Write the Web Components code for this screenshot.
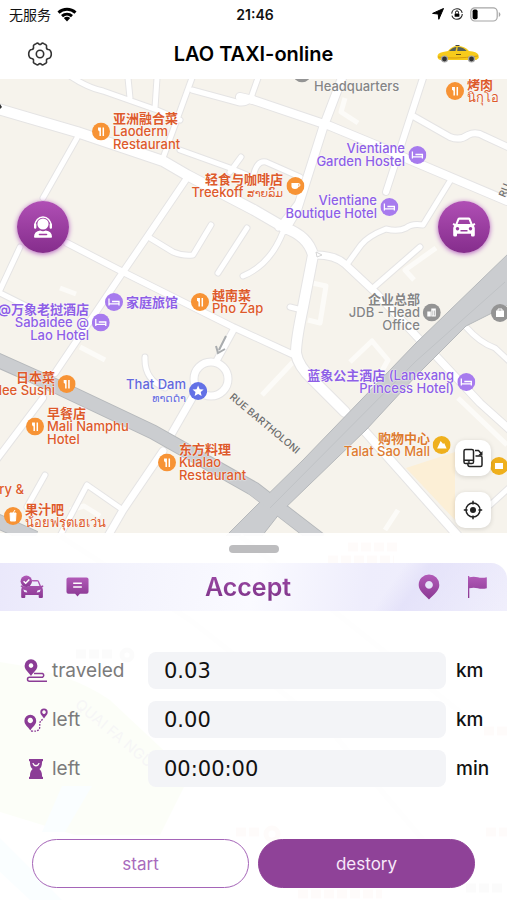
<!DOCTYPE html>
<html lang="en">
<head>
<meta charset="utf-8">
<meta name="viewport" content="width=device-width, initial-scale=1">
<title>LAO TAXI-online</title>
<style>
  body {
    margin: 0;
    min-height: 100vh;
    display: flex;
    flex-direction: column;
    background: #fff;
    color: #111;
    font-family: Inter, "Noto Sans CJK SC", "Noto Sans", "DejaVu Sans", sans-serif;
  }

  /* map and sheet share one cell, the sheet sits at the bottom */
  main {
    flex: 1;
    display: grid;
    grid-template: minmax(0, 1fr) / minmax(0, 1fr);
    overflow: hidden;
  }

  main > * {
    grid-area: 1 / 1;
  }

  trip-sheet {
    align-self: end;
  }
</style>
</head>
<body>
  <status-bar></status-bar>
  <nav-bar>LAO TAXI-online</nav-bar>
  <main>
    <map-view>
      <map-poi kind="office" x="302" y="-6"><br><br>Headquarters</map-poi>
      <map-poi kind="food" x="455" y="12"><b>烤肉</b><br>นิกุโอ</map-poi>
      <map-poi kind="food" x="101" y="52"><b>亚洲融合菜</b><br>Laoderm<br>Restaurant</map-poi>
      <map-poi kind="bed" x="417" y="76" side="left">Vientiane<br>Garden Hostel</map-poi>
      <map-poi kind="cafe" x="295" y="107" side="left"><b>轻食与咖啡店</b><br>Treekoff <small>ສາຍລົມ</small></map-poi>
      <map-poi kind="bed" x="389" y="128" side="left">Vientiane<br>Boutique Hotel</map-poi>
      <map-poi kind="bed" x="114" y="223"><b>家庭旅馆</b></map-poi>
      <map-poi kind="bed" x="101" y="243" side="left"><b>@万象老挝酒店</b><br>Sabaidee @<br>Lao Hotel</map-poi>
      <map-poi kind="food" x="200" y="223"><b>越南菜</b><br>Pho Zap</map-poi>
      <map-poi kind="office" x="432" y="233" side="left"><b>企业总部</b><br>JDB - Head<br>Office</map-poi>
      <map-poi kind="bag" x="500" y="234"></map-poi>
      <map-poi kind="bed" x="466" y="303" side="left"><b>蓝象公主酒店</b> (Lanexang<br>Princess Hotel)</map-poi>
      <map-poi kind="star" x="198" y="312" side="left">That Dam<br><small>ທາດດຳ</small></map-poi>
      <map-poi kind="food" x="67" y="305" side="left"><b>日本菜</b><br>lee Sushi</map-poi>
      <map-poi kind="food" x="35" y="347"><b>早餐店</b><br>Mali Namphu<br>Hotel</map-poi>
      <map-poi kind="food" x="167" y="383"><b>东方料理</b><br>Kualao<br>Restaurant</map-poi>
      <map-poi kind="mall" x="442" y="366" side="left"><b>购物中心</b><br>Talat Sao Mall</map-poi>
      <map-poi kind="shop" x="499" y="387"></map-poi>
      <map-poi kind="juice" x="13" y="437"><b>果汁吧</b><br>น้อยฟรุตเฮเว่น</map-poi>
      <map-poi kind="none" x="36" y="410" side="left">ry &amp;</map-poi>
    </map-view>
    <trip-sheet heading="Accept">
      <metric-row icon="travel" label="traveled" value="0.03" unit="km"></metric-row>
      <metric-row icon="route" label="left" value="0.00" unit="km"></metric-row>
      <metric-row icon="hourglass" label="left" value="00:00:00" unit="min"></metric-row>
      <pill-button slot="actions">start</pill-button>
      <pill-button slot="actions" filled>destory</pill-button>
    </trip-sheet>
  </main>

<script>
const ICONS = {
  wifi: ['0 0 20 15', '<g fill="none" stroke="#000" stroke-width="3"><path d="M1.5 5.6a12.5 12.5 0 0 1 17 0"/><path d="M5 9.2a7.6 7.6 0 0 1 10 0"/></g><path d="M10 14.5l-3.2-3.4a5 5 0 0 1 6.4 0z"/>'],
  location: ['0 0 12 12', '<path d="M11.5.5L6.8 11.3 6.2 6 .6 5.4z" stroke="#000" stroke-linejoin="round"/>'],
  lock: ['0 0 14 14', '<circle cx="7" cy="7" r="5.3" fill="none" stroke="#222" stroke-width="1.1" stroke-dasharray="14.6 2"/><rect x="4.6" y="6.4" width="4.8" height="3.4" rx=".5"/><path d="M5.5 6.5V5.4a1.5 1.5 0 0 1 3 0v1.1" fill="none" stroke="#000"/>'],
  battery: ['0 0 31 15', '<rect x=".8" y=".8" width="26.4" height="13.2" rx="4" fill="#fff" stroke="#a6a6a6" stroke-width="1.2"/><rect x="2.6" y="2.6" width="5" height="9.6" rx="1.6"/><path d="M28.8 5v5q1.6-.7 1.6-2.5T28.8 5z" fill="#a6a6a6"/>'],
  gear: ['0 0 26 26', '<g fill="none" stroke="#333" stroke-width="1.6" stroke-linejoin="round"><path d="M9.2 2.6q1.4-1 2.5.2 1.3 1.2 2.6 0 1.1-1.2 2.5-.2l2 1.1q1.2.8.7 2.4-.3 2 1.7 2.4 1.7.2 2.3 1.5.9 1.5.8 3 .1 1.6-.8 3.1-.7 1.2-2.3 1.4-2 .4-1.7 2.4.5 1.6-.7 2.4l-2 1.1q-1.4 1-2.5-.2-1.3-1.2-2.6 0-1.1 1.2-2.5.2l-2-1.1q-1.2-.8-.7-2.4.3-2-1.7-2.4-1.7-.2-2.3-1.4-.9-1.5-.8-3.1-.1-1.5.8-3 .6-1.3 2.3-1.5 2-.4 1.7-2.4-.5-1.6.7-2.4z"/><circle cx="13" cy="13" r="3.7"/></g>'],
  taxi: ['0 0 44 18', '<path d="M1.5 12Q1 8 7 7l5-1q4-5 9-5 8 0 12 5 8 .5 9.500 4l.3 3-2.500 2H5q-3 0-3.500-3z" fill="#f7cb1b"/><path d="M13 6q4-4 7.500-4L19.500 6zM21.700 2q5.500-.2 9 4h-9.500z" fill="#54605c"/><path d="M2 12q16 2.500 40-1" stroke="#d99d0d" fill="none"/><path d="M20 9.500h5" stroke="#6b5413"/><g fill="#333" stroke="#aaa" stroke-width="1.2"><circle cx="8.5" cy="14" r="3"/><circle cx="35.5" cy="14" r="3"/></g><path d="M19 1l1-1h3l1 1z" fill="#444"/>'],
  agent: ['0 0 24 24', '<g fill="#fff"><circle cx="12" cy="9" r="5.6"/><path d="M3 22q0-6 6.200-6.600 2.800 1.500 5.600 0Q21 16 21 22q0 .8-1 .8H4q-1 0-1-.8z"/></g><path d="M4 10.500a8 8.600 0 0 1 16 0" fill="none" stroke="#fff" stroke-width="1.5"/><path d="M4.200 9.500v3M19.800 9.500v3" stroke="#fff" stroke-width="2.400" stroke-linecap="round"/><path d="M8.500 19.500h7" stroke="#a03aa0" stroke-width="1.6" stroke-linecap="round"/>'],
  car: ['0 0 24 20', '<path fill="#fff" fill-rule="evenodd" d="M3.4 7L5.6 1.6Q6.1.4 7.4.4h9.2q1.3 0 1.8 1.2L20.6 7l1.900-.9.9 1.600-1.600 1q1 1 1 2.800V18q0 1.600-1.400 1.600h-1.200q-1.200 0-1.200-1.400v-1.400H5v1.400q0 1.400-1.200 1.400H2.600q-1.400 0-1.400-1.600v-6.500q0-1.800 1-2.800l-1.600-1 .9-1.600zM5.600 7h12.800l-1.700-4.200H7.300zM5.500 10a1.700 1.700 0 1 0 .01 0zM18.500 10a1.700 1.700 0 1 0 .01 0zM8.500 13h7v1.400h-7z"/>'],
  rotate: ['0 0 20 20', '<g fill="none" stroke="#222" stroke-width="1.5" stroke-linejoin="round"><rect x="1" y="1.5" width="9.5" height="14" rx="1.6"/><path d="M1 12.300h9.500M4.800 14h2M12.500 8h5q1.500 0 1.500 1.500v7.500q0 1.500-1.500 1.500H6.500Q5 18.500 4.800 16"/><path d="M12 2.500h3.500l2.700 3"/></g><path d="M19.500 3v4.500H15z" fill="#222"/>'],
  locate: ['0 0 20 20', '<circle cx="10" cy="10" r="7" fill="none" stroke="#222" stroke-width="1.5"/><circle cx="10" cy="10" r="3" fill="#222"/><path d="M10 .8v3.800M10 15.400v3.800M.8 10h3.800M15.400 10h3.800" stroke="#222" stroke-width="1.5"/>'],
  carCheck: ['0 0 24 24', '<path fill="url(#p)" fill-rule="evenodd" d="M11.500 5H17q1.500 0 2 1.200L21 11l2-.7.4 1.400-1.300.7q.8 1 .8 2.500v7q0 1-1 1h-2.200q-1 0-1-1v-1.800H5.300v1.800q0 1-1 1H2.200q-1 0-1-1v-7q0-1.400.8-2.400L.6 11.500l.5-1.200q4 2 8.400.7h10L17.700 6.400h-5.300zM3.300 14.600l1 2.400 3 .6-.8-2.200zM20.700 14.600l-3.200.8-.8 2.200 3-.6z"/><circle cx="6.3" cy="6.3" r="5.7" fill="url(#p)"/><path d="M3.600 6.300l2.100 2 3.600-3.700" fill="none" stroke="#fff" stroke-width="1.5"/>'],
  message: ['0 0 24 20', '<path fill="url(#p)" d="M2.500 0h19Q23.500 0 23.500 2v13q0 2-2 2h-7L12 20l-2.500-3h-7q-2 0-2-2V2q0-2 2-2z"/><path d="M7.500 6h9M7.500 10h9" stroke="#fff" stroke-width="1.6"/>'],
  pin: ['0 0 22 26', '<path fill="url(#p)" fill-rule="evenodd" d="M11 .5A10.300 10.300 0 0 1 21.300 11c0 5.500-5 9-10.300 14.500C5.700 20 .7 16.500.7 11A10.300 10.300 0 0 1 11 .5zM11 7a3.900 3.900 0 1 0 .01 0z"/>'],
  flag: ['0 0 22 24', '<path fill="url(#p)" d="M2 1h1.300v1.200q4.500-1 8.500 0t9 0v11q-5 1-9 0t-8.500 0V23H2z"/>'],
  travel: ['0 0 24 24', '<path fill="#8b3c96" fill-rule="evenodd" d="M7 .3a6.400 6.400 0 0 1 6.400 6.400c0 4-3.700 6-6.400 10.300C4.300 12.700.6 10.700.6 6.700A6.400 6.400 0 0 1 7 .3zM7 4.300a2.300 2.300 0 1 0 .01 0z"/><path d="M10 14.500h8.500a2 2 0 0 1 0 3.700H5.500a2 2 0 0 0 0 4H23" fill="none" stroke="#8b3c96" stroke-width="1.5"/>'],
  route: ['0 0 24 24', '<path fill="#8b3c96" fill-rule="evenodd" d="M6.300 6.800a5.900 5.900 0 0 1 5.900 5.900c0 4-3.400 5.800-5.900 9.700C3.800 18.500.4 16.700.4 12.700a5.900 5.900 0 0 1 5.900-5.900zM6.300 9.800a2.700 2.700 0 1 0 .01 0zM20 .5a3.700 3.700 0 0 1 3.700 3.700c0 2.600-2.100 3.600-3.700 6.200-1.600-2.600-3.700-3.600-3.700-6.200A3.700 3.700 0 0 1 20 .5zM20 2.300a1.800 1.800 0 1 0 .01 0z"/><path d="M7 23q7 1 8.500-2.500c1-4-1.500-7 4-9.500" fill="none" stroke="#8b3c96" stroke-width="1.3" stroke-dasharray="1.8 1.2"/>'],
  hourglass: ['0 0 24 24', '<path fill="#8b3c96" fill-rule="evenodd" d="M5 2h14v2.200h-1c.2 4-.8 6.300-2.600 7.800 1.800 1.500 2.800 3.800 2.600 7.800h1V22H5v-2.200h1c-.2-4 .8-6.300 2.600-7.800C6.800 10.500 5.800 8.200 6 4.200H5zM8.300 6q1.200 3.600 3.700 3.600T15.700 6h-1.200q-.7 2-2.500 2T9.500 6z"/>']
};

const POI_KINDS = {
  food: ['#f79335', '#dd5a2b', '<path d="M6.8 5v3M8.2 5v8.500M6.800 8h2M11.300 5v8.500M11.300 5.500v3.500" stroke="#fff" stroke-width="1.5"/>'],
  juice: ['#f79335', '#dd5a2b', '<path d="M6 6h6l-.5 8h-5zM9 6l2-3" fill="#fff" stroke="#fff"/>'],
  cafe: ['#f79335', '#dd5a2b', '<path d="M5 6h7v3q0 3-3.500 3T5 9z" fill="#fff"/><circle cx="12" cy="8" r="1.5" fill="none" stroke="#fff"/>'],
  bed: ['#a77bee', '#8e5fe6', '<path d="M4 5.500v7M4 10.800h10v1.700M14 11V8.500H7" fill="none" stroke="#fff" stroke-width="1.3"/>'],
  office: ['#949494', '#858585', '<path d="M4.500 13V8H8v5zM8.500 13V5H13v8z" fill="#fff"/><path d="M10 7v5M11.700 7v5" stroke="#999" stroke-width=".6"/>'],
  bag: ['#949494', '#858585', '<path d="M5 6.500h8v6.500H5z" fill="#fff"/><path d="M7 7V5h4v2" fill="none" stroke="#fff"/>'],
  mall: ['#efb01d', '#dd7b30', '<path d="M4.500 12.500L8 5l2.500 3 1-1 2.500 5.500z" fill="#fff"/>'],
  shop: ['#efb01d', '#dd7b30', '<path d="M5 6h8v6H5z" fill="#fff"/>'],
  star: ['#6371e6', '#6368dc', '<path d="M9 3.500l1.600 3.700 4 .3-3 2.600.9 3.900L9 11.900 5.500 14l.9-3.900-3-2.600 4-.3z" fill="#fff"/>'],
  none: ['none', '#dd5a2b', '']
};

class UiIcon extends HTMLElement {
  constructor() {
    super();
    this.attachShadow({ mode: 'open' });
  }

  connectedCallback() {
    const [viewBox, body] = ICONS[this.getAttribute('name')];
    this.shadowRoot.innerHTML = `
      <style>
        :host { display: inline-flex; width: 24px; height: 24px; flex: none; }
        svg { width: 100%; height: 100%; }
      </style>
      <svg viewBox="${viewBox}" aria-hidden="true">
        <defs>
          <linearGradient id="p" x1="0" y1="0" x2="0" y2="1">
            <stop offset="0" stop-color="#b25bb8"/>
            <stop offset="1" stop-color="#8a3893"/>
          </linearGradient>
        </defs>
        ${body}
      </svg>
    `;
  }
}

class StatusBar extends HTMLElement {
  constructor() {
    super();
    this.attachShadow({ mode: 'open' }).innerHTML = `
      <style>
        :host {
          display: grid;
          grid-template-columns: 1fr auto 1fr;
          align-items: center;
          height: 28px;
          padding: 0 6px 0 9px;
          font-size: 14px;
        }
        .left, .right { display: flex; align-items: center; gap: 6px; }
        .right { justify-content: flex-end; }
        time { font-weight: 600; }
        .wifi { width: 20px; height: 15px; }
        .small { width: 12px; height: 12px; }
        .lock { width: 14px; height: 14px; }
        .battery { width: 31px; height: 15px; }
      </style>
      <div class="left"><span>无服务</span><ui-icon class="wifi" name="wifi"></ui-icon></div>
      <time>21:46</time>
      <div class="right">
        <ui-icon class="small" name="location"></ui-icon>
        <ui-icon class="lock" name="lock"></ui-icon>
        <ui-icon class="battery" name="battery"></ui-icon>
      </div>
    `;
  }
}

class NavBar extends HTMLElement {
  constructor() {
    super();
    this.attachShadow({ mode: 'open' }).innerHTML = `
      <style>
        :host {
          display: flex;
          align-items: center;
          justify-content: space-between;
          height: 51px;
          padding: 0 27px;
        }
        button { border: 0; background: none; padding: 0; width: 44px; display: flex; }
        .gear { width: 26px; height: 26px; }
        .taxi { width: 44px; height: 18px; }
        h1 { margin: 0; font-size: 20px; line-height: 24px; font-weight: 600; color: #000; }
      </style>
      <button aria-label="Settings"><ui-icon class="gear" name="gear"></ui-icon></button>
      <h1><slot></slot></h1>
      <button aria-label="Taxi"><ui-icon class="taxi" name="taxi"></ui-icon></button>
    `;
  }
}

class MapPoi extends HTMLElement {
  constructor() {
    super();
    this.attachShadow({ mode: 'open' });
  }

  connectedCallback() {
    const [fill, color, glyph] = POI_KINDS[this.getAttribute('kind')];
    const left = this.getAttribute('side') === 'left';
    const x = Number(this.getAttribute('x')) + (left ? 9 : -9);
    this.shadowRoot.innerHTML = `
      <style>
        :host {
          position: absolute;
          left: ${x}px;
          top: ${this.getAttribute('y')}px;
          transform: translate(${left ? '-100%' : '0'}, -50%);
          display: flex;
          flex-direction: ${left ? 'row-reverse' : 'row'};
          align-items: center;
          gap: 3px;
          color: ${color};
          font-size: 13px;
          line-height: 13px;
          font-weight: 500;
          white-space: nowrap;
          text-align: ${left ? 'right' : 'left'};
          text-shadow: 0 0 1px #fff, 0 0 2px #fff;
        }
        ::slotted(small) { font-size: 11px; line-height: 11px; }
        svg { width: 18px; height: 18px; flex: none; }
      </style>
      <svg viewBox="0 0 18 18" aria-hidden="true"><circle cx="9" cy="9" r="9" fill="${fill}"/>${glyph}</svg>
      <span><slot></slot></span>
    `;
  }
}

// street geometry, wide streets first
const STREETS = [
  [10, 'M-5 108L77 132 163 161 187 175 254 210 285 228Q308 236 313 255L303 307Q296 340 296 353 298 366 313 380L345 412'],
  [8, 'M253 100L330 126 376 145 410 160 507 201'],
  [8, 'M240 97L253 100M342 78L323 128 297 210 285 230'],
  [7, 'M316 255Q335 255 345 264L376 293 420 340M437 357L480 403 510 430'],
  [8, 'M362 428L458 536'],
  [6, 'M67 243L123 272 233 327 296 356'],
  [6, 'M187 178L147 237 123 272 55 373M43 398L-3 459'],
  [5, 'M77 138L43 198M20 247L0 290M0 293L30 308'],
  [5, 'M70 76Q88 88 103 91L157 110 180 120M192 78L163 158M157 78L155 108M128 78L130 98'],
  [5, 'M180 150L230 168 254 178M241 157L230 172'],
  [5, 'M192 90L240 103Q250 104 253 92L258 78'],
  [6, 'M423 78L411 115 386 192M413 116L450 137Q460 141 468 135 476 131 484 136L510 148'],
  [5, 'M450 181L423 225Q412 223 406 228 398 232 386 229 368 236 361 245L348 263'],
  [5, 'M420 247L373 288'],
  [5, 'M253 178Q256 160 266 162L300 177M278 228L300 200'],
  [5, 'M283 232Q270 265 243 276M247 228L218 273M211 225L193 255Q182 256 173 252L150 238'],
  [5, 'M290 307L302 310M145 357Q144 380 165 388'],
  [6, 'M234 329L217 360'],
  [7, 'M195 393L168 440M163 451L123 510 108 536'],
  [5, 'M123 510L87 485 60 536M45 475L27 507'],
  [5, 'M466 327Q480 343 495 348L510 362M510 487L488 507']
];

class MapView extends HTMLElement {
  constructor() {
    super();
    const casing = STREETS.map(([w, d]) => `<path d="${d}" stroke-width="${w + 2}"/>`).join('');
    const fill = STREETS.map(([w, d]) => `<path d="${d}" stroke-width="${w}"/>`).join('');
    this.attachShadow({ mode: 'open' }).innerHTML = `
      <style>
        :host { display: block; position: relative; overflow: hidden; background: #f6f3ec; }
        .canvas { position: absolute; top: 0; left: 0; width: 100%; height: 100%; }
        .street { font: 500 10px Inter, sans-serif; fill: #6d6d6d; }
        .river { font-size: 15px; }
        button { border: 0; padding: 0; display: flex; align-items: center; justify-content: center; }
        .round {
          position: absolute;
          top: 122px;
          width: 52px;
          height: 52px;
          border-radius: 50%;
          background: linear-gradient(#b04fb5, #852d8c);
          box-shadow: 0 1px 5px #b45fc0;
        }
        .agent { left: 17px; }
        .cab { right: 17px; }
        .tools {
          position: absolute;
          top: 361px;
          right: 16px;
          display: flex;
          flex-direction: column;
          gap: 16px;
        }
        .tools button {
          width: 36px;
          height: 36px;
          border-radius: 10px;
          background: #fff;
          box-shadow: 0 1px 5px rgba(0, 0, 0, .14);
        }
        .tools ui-icon { width: 20px; height: 20px; }
      </style>
      <svg class="canvas" viewBox="0 79 507 821" preserveAspectRatio="xMinYMin slice" aria-hidden="true">
        <path d="M406 468L455 452V520z" fill="#fcefd6"/>
        <g fill="none" stroke="#fcfbf8" stroke-width="5" stroke-linejoin="round">
          <path d="M345 98L341 112 358 123M312 283L326 286 320 323 308 320M350 362L372 341 388 360 378 378M436 248L405 270 414 280M60 288L76 294M80 347L105 360M70 510L84 506 100 516M385 530L398 510M293 362L262 395"/>
          <path d="M458 398L507 445"/>
        </g>
        <g fill="none" stroke="#e5e4e4" stroke-linejoin="round" stroke-linecap="round">${casing}<circle cx="211" cy="379" r="17" stroke-width="9"/></g>
        <g fill="none" stroke="#fff" stroke-linejoin="round" stroke-linecap="round">${fill}<circle cx="211" cy="379" r="17" stroke-width="7"/></g>
        <g fill="none" stroke-linejoin="round">
          <path d="M-5 359L60 388 153 432 254 489 320 540M-5 520L35 538" stroke="#b5b8bb" stroke-width="15"/>
          <path d="M-5 359L60 388 153 432 254 489 320 540M-5 520L35 538" stroke="#cbcdd0" stroke-width="13"/>
        </g>
        <path d="M510 252L416 343 390 370 303 460 254 508 226 536H262L280 513 366 430 416 376 466 326 510 304z" fill="#cbcdd0" stroke="#b5b8bb"/>
        <path d="M252 488L320 540" fill="none" stroke="#cbcdd0" stroke-width="13"/>
        <path d="M505 282L415 362 270 508" fill="none" stroke="#c0c3c6"/>
        <path d="M316 252L322 255 317 257z" fill="#fff" stroke="#d5d5d5"/>
        <path d="M226 336L219 350M216 346L218 353 225 349" fill="none" stroke="#a9acae" stroke-width="2"/>
        <path d="M0 104l2 3-2 2z" fill="#333"/>
        <text class="street" transform="translate(229 398) rotate(40)">RUE BARTHOLONI</text>
        <text class="street" transform="translate(505 198) rotate(-68)">RU</text>

        <!-- riverside, seen through the sheet -->
        <rect y="536" width="507" height="364" fill="#fbfaf8"/>
        <path d="M0 662Q70 672 110 700L190 775 160 835H75L0 812z" fill="#c4ec8c"/>
        <path d="M62 786H92L65 832H42zM0 838L62 900H30L0 872z" fill="#a8e4f2"/>
        <path d="M60 536L190 620 330 730 440 860M240 536L470 720" fill="none" stroke="#eee" stroke-width="6"/>
        <text class="street river" transform="translate(74 706) rotate(40)">QUAI FA NGUM</text>
        <g fill="none" stroke="#eab8a8" stroke-width="9" stroke-dasharray="10 3">
          <path d="M236 832h26M348 547h50M328 560h66M484 731h23M486 832h21M298 894h84"/>
          <circle cx="272" cy="834" r="6" stroke-width="5" stroke-dasharray="none"/>
        </g>
        <g fill="none" stroke="#bbb" stroke-width="9" stroke-dasharray="10 3">
          <path d="M76 654h39M466 888h36"/>
          <circle cx="127" cy="655" r="5" stroke-width="5" stroke-dasharray="none"/>
        </g>
      </svg>
      <slot></slot>
      <button class="round agent" aria-label="Customer service"><ui-icon name="agent"></ui-icon></button>
      <button class="round cab" aria-label="Vehicle"><ui-icon name="car"></ui-icon></button>
      <div class="tools">
        <button aria-label="Rotate"><ui-icon name="rotate"></ui-icon></button>
        <button aria-label="Locate me"><ui-icon name="locate"></ui-icon></button>
      </div>
    `;
  }
}

class TripSheet extends HTMLElement {
  constructor() {
    super();
    this.attachShadow({ mode: 'open' });
  }

  connectedCallback() {
    this.shadowRoot.innerHTML = `
      <style>
        :host {
          display: block;
          position: relative;
          background: rgba(255, 255, 255, .94);
        }
        .grip { display: flex; justify-content: center; padding: 12px 0 10px; }
        .grip i { width: 50px; height: 8px; border-radius: 4px; background: #bdbdbf; }
        header {
          display: grid;
          grid-template-columns: 1fr auto 1fr;
          align-items: center;
          height: 48px;
          padding: 0 19px 0 20px;
          border-radius: 0 16px 0 0;
          background:
            linear-gradient(125deg, transparent 75%, rgba(222, 219, 248, .6) 80%, rgba(238, 236, 252, .2) 100%),
            linear-gradient(100deg, #eae8fb 0, #f3f3fd 24%, #fafaff 50%, #eeedfc 72%, #f1f0fc 100%);
        }
        h2 {
          margin: 0;
          padding-right: 12px;
          font-size: 25px;
          line-height: 32px;
          font-weight: 600;
          background: linear-gradient(#a04ba8, #7a3286);
          background-clip: text;
          -webkit-background-clip: text;
          color: transparent;
        }
        nav { display: flex; align-items: center; gap: 22px; }
        nav:last-child { justify-content: flex-end; gap: 26px; }
        nav button { border: 0; padding: 0; background: none; display: flex; }
        .message { width: 23px; height: 20px; }
        .pin { width: 22px; height: 26px; }
        .flag { width: 22px; height: 24px; }
        .rows {
          display: flex;
          flex-direction: column;
          gap: 12px;
          padding: 41px 14px 52px 24px;
        }
        footer { display: flex; gap: 9px; padding: 0 32px 12px; }
      </style>
      <div class="grip"><i></i></div>
      <header>
        <nav>
          <button aria-label="Order"><ui-icon name="carCheck"></ui-icon></button>
          <button aria-label="Messages"><ui-icon class="message" name="message"></ui-icon></button>
        </nav>
        <h2>${this.getAttribute('heading')}</h2>
        <nav>
          <button aria-label="Pickup"><ui-icon class="pin" name="pin"></ui-icon></button>
          <button aria-label="Destination"><ui-icon class="flag" name="flag"></ui-icon></button>
        </nav>
      </header>
      <div class="rows"><slot></slot></div>
      <footer><slot name="actions"></slot></footer>
    `;
  }
}

class MetricRow extends HTMLElement {
  constructor() {
    super();
    this.attachShadow({ mode: 'open' });
  }

  connectedCallback() {
    this.shadowRoot.innerHTML = `
      <style>
        :host {
          display: grid;
          grid-template-columns: 124px minmax(0, 1fr) 47px;
          align-items: center;
          font-size: 19px;
        }
        label { display: flex; align-items: center; gap: 4px; color: #7b7b7b; }
        input {
          box-sizing: border-box;
          width: 100%;
          height: 37px;
          padding: 0 16px;
          border: 0;
          border-radius: 8px;
          background: #f3f4f7;
          color: #111;
          font: 21px "DejaVu Sans", sans-serif;
        }
        .unit { padding-left: 10px; font-weight: 500; }
      </style>
      <label for="value"><ui-icon name="${this.getAttribute('icon')}"></ui-icon>${this.getAttribute('label')}</label>
      <input id="value" readonly value="${this.getAttribute('value')}">
      <span class="unit">${this.getAttribute('unit')}</span>
    `;
  }
}

class PillButton extends HTMLElement {
  constructor() {
    super();
    this.attachShadow({ mode: 'open' }).innerHTML = `
      <style>
        :host { display: block; flex: 1; }
        button {
          box-sizing: border-box;
          width: 100%;
          height: 49px;
          border: 1px solid #a565b8;
          border-radius: 25px;
          background: #fff;
          color: #a86bbd;
          font: 17px Inter, sans-serif;
        }
        :host([filled]) button { background: #8f4298; border-color: #8f4298; color: #f8e8fa; }
      </style>
      <button><slot></slot></button>
    `;
  }
}

customElements.define('ui-icon', UiIcon);
customElements.define('status-bar', StatusBar);
customElements.define('nav-bar', NavBar);
customElements.define('map-poi', MapPoi);
customElements.define('map-view', MapView);
customElements.define('trip-sheet', TripSheet);
customElements.define('metric-row', MetricRow);
customElements.define('pill-button', PillButton);
</script>
</body>
</html>
